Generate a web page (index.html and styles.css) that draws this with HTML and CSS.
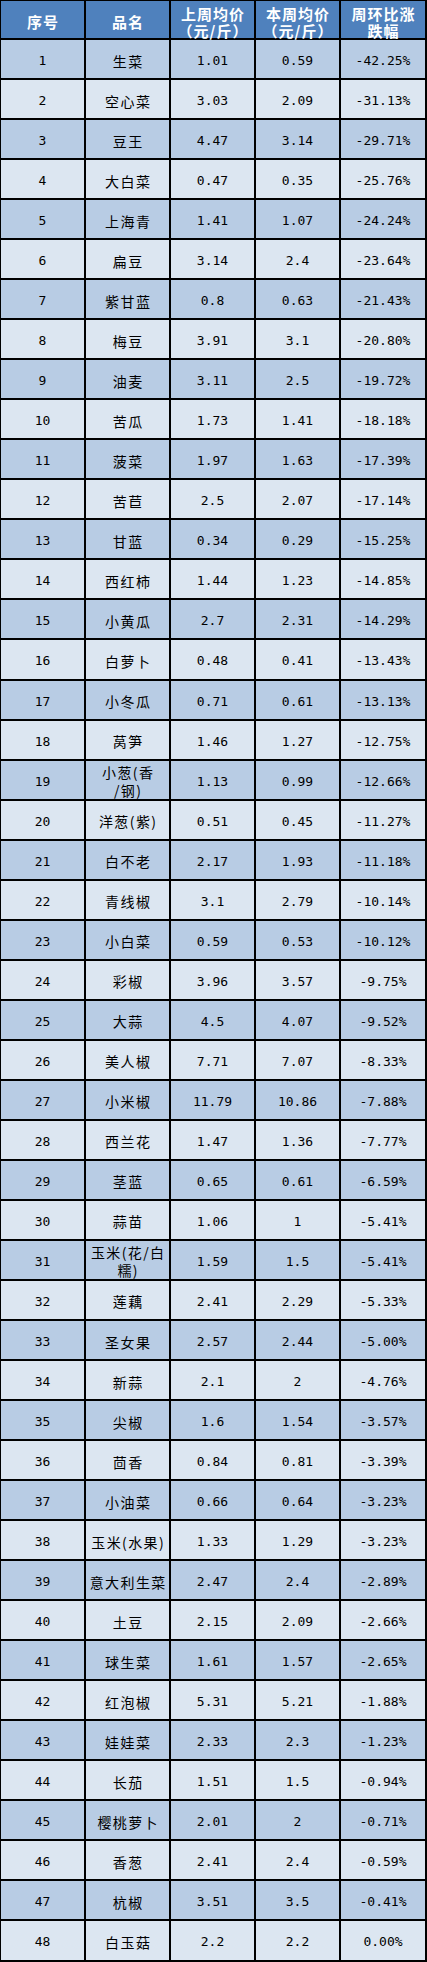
FILE: index.html
```html
<!DOCTYPE html>
<html lang="zh-CN">
<head>
<meta charset="utf-8">
<title>蔬菜价格周环比</title>
<link rel="stylesheet" href="styles.css">
</head>
<body>
<div class="sheet">
  <div class="row head">
    <div class="cell">序号</div>
    <div class="cell">品名</div>
    <div class="cell">上周均价<br>（元/斤）</div>
    <div class="cell">本周均价<br>（元/斤）</div>
    <div class="cell">周环比涨<br>跌幅</div>
  </div>
  <div class="row odd"><div class="cell num">1</div><div class="cell name">生菜</div><div class="cell num">1.01</div><div class="cell num">0.59</div><div class="cell num">-42.25%</div></div>
  <div class="row even"><div class="cell num">2</div><div class="cell name">空心菜</div><div class="cell num">3.03</div><div class="cell num">2.09</div><div class="cell num">-31.13%</div></div>
  <div class="row odd"><div class="cell num">3</div><div class="cell name">豆王</div><div class="cell num">4.47</div><div class="cell num">3.14</div><div class="cell num">-29.71%</div></div>
  <div class="row even"><div class="cell num">4</div><div class="cell name">大白菜</div><div class="cell num">0.47</div><div class="cell num">0.35</div><div class="cell num">-25.76%</div></div>
  <div class="row odd"><div class="cell num">5</div><div class="cell name">上海青</div><div class="cell num">1.41</div><div class="cell num">1.07</div><div class="cell num">-24.24%</div></div>
  <div class="row even"><div class="cell num">6</div><div class="cell name">扁豆</div><div class="cell num">3.14</div><div class="cell num">2.4</div><div class="cell num">-23.64%</div></div>
  <div class="row odd"><div class="cell num">7</div><div class="cell name">紫甘蓝</div><div class="cell num">0.8</div><div class="cell num">0.63</div><div class="cell num">-21.43%</div></div>
  <div class="row even"><div class="cell num">8</div><div class="cell name">梅豆</div><div class="cell num">3.91</div><div class="cell num">3.1</div><div class="cell num">-20.80%</div></div>
  <div class="row odd"><div class="cell num">9</div><div class="cell name">油麦</div><div class="cell num">3.11</div><div class="cell num">2.5</div><div class="cell num">-19.72%</div></div>
  <div class="row even"><div class="cell num">10</div><div class="cell name">苦瓜</div><div class="cell num">1.73</div><div class="cell num">1.41</div><div class="cell num">-18.18%</div></div>
  <div class="row odd"><div class="cell num">11</div><div class="cell name">菠菜</div><div class="cell num">1.97</div><div class="cell num">1.63</div><div class="cell num">-17.39%</div></div>
  <div class="row even"><div class="cell num">12</div><div class="cell name">苦苣</div><div class="cell num">2.5</div><div class="cell num">2.07</div><div class="cell num">-17.14%</div></div>
  <div class="row odd"><div class="cell num">13</div><div class="cell name">甘蓝</div><div class="cell num">0.34</div><div class="cell num">0.29</div><div class="cell num">-15.25%</div></div>
  <div class="row even"><div class="cell num">14</div><div class="cell name">西红柿</div><div class="cell num">1.44</div><div class="cell num">1.23</div><div class="cell num">-14.85%</div></div>
  <div class="row odd"><div class="cell num">15</div><div class="cell name">小黄瓜</div><div class="cell num">2.7</div><div class="cell num">2.31</div><div class="cell num">-14.29%</div></div>
  <div class="row even"><div class="cell num">16</div><div class="cell name">白萝卜</div><div class="cell num">0.48</div><div class="cell num">0.41</div><div class="cell num">-13.43%</div></div>
  <div class="row odd"><div class="cell num">17</div><div class="cell name">小冬瓜</div><div class="cell num">0.71</div><div class="cell num">0.61</div><div class="cell num">-13.13%</div></div>
  <div class="row even"><div class="cell num">18</div><div class="cell name">莴笋</div><div class="cell num">1.46</div><div class="cell num">1.27</div><div class="cell num">-12.75%</div></div>
  <div class="row odd"><div class="cell num">19</div><div class="cell name two">小葱(香<br>/钢)</div><div class="cell num">1.13</div><div class="cell num">0.99</div><div class="cell num">-12.66%</div></div>
  <div class="row even"><div class="cell num">20</div><div class="cell name">洋葱(紫)</div><div class="cell num">0.51</div><div class="cell num">0.45</div><div class="cell num">-11.27%</div></div>
  <div class="row odd"><div class="cell num">21</div><div class="cell name">白不老</div><div class="cell num">2.17</div><div class="cell num">1.93</div><div class="cell num">-11.18%</div></div>
  <div class="row even"><div class="cell num">22</div><div class="cell name">青线椒</div><div class="cell num">3.1</div><div class="cell num">2.79</div><div class="cell num">-10.14%</div></div>
  <div class="row odd"><div class="cell num">23</div><div class="cell name">小白菜</div><div class="cell num">0.59</div><div class="cell num">0.53</div><div class="cell num">-10.12%</div></div>
  <div class="row even"><div class="cell num">24</div><div class="cell name">彩椒</div><div class="cell num">3.96</div><div class="cell num">3.57</div><div class="cell num">-9.75%</div></div>
  <div class="row odd"><div class="cell num">25</div><div class="cell name">大蒜</div><div class="cell num">4.5</div><div class="cell num">4.07</div><div class="cell num">-9.52%</div></div>
  <div class="row even"><div class="cell num">26</div><div class="cell name">美人椒</div><div class="cell num">7.71</div><div class="cell num">7.07</div><div class="cell num">-8.33%</div></div>
  <div class="row odd"><div class="cell num">27</div><div class="cell name">小米椒</div><div class="cell num">11.79</div><div class="cell num">10.86</div><div class="cell num">-7.88%</div></div>
  <div class="row even"><div class="cell num">28</div><div class="cell name">西兰花</div><div class="cell num">1.47</div><div class="cell num">1.36</div><div class="cell num">-7.77%</div></div>
  <div class="row odd"><div class="cell num">29</div><div class="cell name">茎蓝</div><div class="cell num">0.65</div><div class="cell num">0.61</div><div class="cell num">-6.59%</div></div>
  <div class="row even"><div class="cell num">30</div><div class="cell name">蒜苗</div><div class="cell num">1.06</div><div class="cell num">1</div><div class="cell num">-5.41%</div></div>
  <div class="row odd"><div class="cell num">31</div><div class="cell name two">玉米(花/白<br>糯)</div><div class="cell num">1.59</div><div class="cell num">1.5</div><div class="cell num">-5.41%</div></div>
  <div class="row even"><div class="cell num">32</div><div class="cell name">莲藕</div><div class="cell num">2.41</div><div class="cell num">2.29</div><div class="cell num">-5.33%</div></div>
  <div class="row odd"><div class="cell num">33</div><div class="cell name">圣女果</div><div class="cell num">2.57</div><div class="cell num">2.44</div><div class="cell num">-5.00%</div></div>
  <div class="row even"><div class="cell num">34</div><div class="cell name">新蒜</div><div class="cell num">2.1</div><div class="cell num">2</div><div class="cell num">-4.76%</div></div>
  <div class="row odd"><div class="cell num">35</div><div class="cell name">尖椒</div><div class="cell num">1.6</div><div class="cell num">1.54</div><div class="cell num">-3.57%</div></div>
  <div class="row even"><div class="cell num">36</div><div class="cell name">茴香</div><div class="cell num">0.84</div><div class="cell num">0.81</div><div class="cell num">-3.39%</div></div>
  <div class="row odd"><div class="cell num">37</div><div class="cell name">小油菜</div><div class="cell num">0.66</div><div class="cell num">0.64</div><div class="cell num">-3.23%</div></div>
  <div class="row even"><div class="cell num">38</div><div class="cell name">玉米(水果)</div><div class="cell num">1.33</div><div class="cell num">1.29</div><div class="cell num">-3.23%</div></div>
  <div class="row odd"><div class="cell num">39</div><div class="cell name">意大利生菜</div><div class="cell num">2.47</div><div class="cell num">2.4</div><div class="cell num">-2.89%</div></div>
  <div class="row even"><div class="cell num">40</div><div class="cell name">土豆</div><div class="cell num">2.15</div><div class="cell num">2.09</div><div class="cell num">-2.66%</div></div>
  <div class="row odd"><div class="cell num">41</div><div class="cell name">球生菜</div><div class="cell num">1.61</div><div class="cell num">1.57</div><div class="cell num">-2.65%</div></div>
  <div class="row even"><div class="cell num">42</div><div class="cell name">红泡椒</div><div class="cell num">5.31</div><div class="cell num">5.21</div><div class="cell num">-1.88%</div></div>
  <div class="row odd"><div class="cell num">43</div><div class="cell name">娃娃菜</div><div class="cell num">2.33</div><div class="cell num">2.3</div><div class="cell num">-1.23%</div></div>
  <div class="row even"><div class="cell num">44</div><div class="cell name">长茄</div><div class="cell num">1.51</div><div class="cell num">1.5</div><div class="cell num">-0.94%</div></div>
  <div class="row odd"><div class="cell num">45</div><div class="cell name">樱桃萝卜</div><div class="cell num">2.01</div><div class="cell num">2</div><div class="cell num">-0.71%</div></div>
  <div class="row even"><div class="cell num">46</div><div class="cell name">香葱</div><div class="cell num">2.41</div><div class="cell num">2.4</div><div class="cell num">-0.59%</div></div>
  <div class="row odd"><div class="cell num">47</div><div class="cell name">杭椒</div><div class="cell num">3.51</div><div class="cell num">3.5</div><div class="cell num">-0.41%</div></div>
  <div class="row even"><div class="cell num">48</div><div class="cell name">白玉菇</div><div class="cell num">2.2</div><div class="cell num">2.2</div><div class="cell num">0.00%</div></div>
</div>
</body>
</html>
```
FILE: styles.css
```css
html, body {
  margin: 0;
  padding: 0;
  background: #000;
}

.sheet {
  box-sizing: border-box;
  width: 427px;
  display: grid;
  grid-template-columns: 83px 83px 83px 83px 84px;
  grid-template-rows: 37px repeat(48, 38.0417px);
  gap: 2px;
  padding: 1px 2px 2px 1px;
  background: #000;
}

.row {
  display: contents;
}

.cell {
  display: flex;
  align-items: center;
  justify-content: center;
  text-align: center;
  box-sizing: border-box;
  padding-top: 4px;
  white-space: nowrap;
  overflow: hidden;
  color: #000;
}

.head .cell {
  background: #4f81bd;
  color: #fff;
  font-family: "Noto Sans CJK SC", "Noto Sans", sans-serif;
  font-weight: 700;
  font-size: 15px;
  line-height: 17px;
  letter-spacing: 1px;
  padding-left: 1px;
  overflow: visible;
}

.odd .cell {
  background: #b8cce4;
}

.even .cell {
  background: #dce6f1;
}

.num {
  font-family: "DejaVu Sans Mono", "Liberation Mono", monospace;
  font-size: 13px;
  line-height: 16px;
}

.name {
  font-family: "Noto Sans CJK SC", "Noto Sans", sans-serif;
  font-size: 14px;
  line-height: 17px;
  letter-spacing: 1.4px;
  padding-left: 1.4px;
}

.name.two {
  line-height: 18px;
  padding-top: 2px;
  overflow: visible;
}
```
